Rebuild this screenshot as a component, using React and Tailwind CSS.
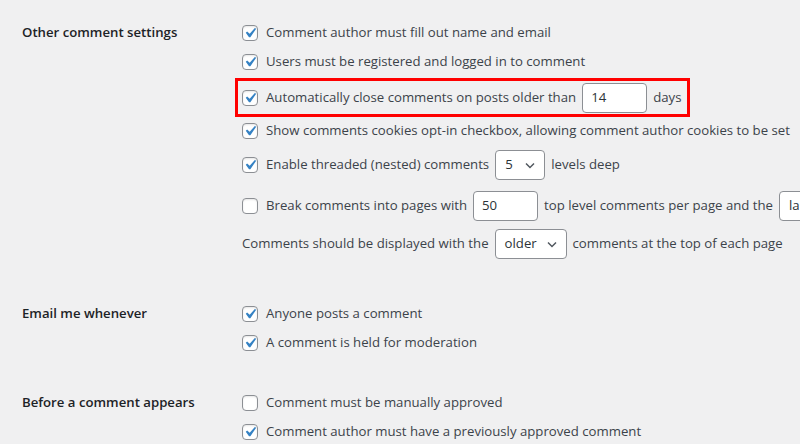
import React from 'react';

const font = { fontFamily: '"Open Sans", "Noto Sans", sans-serif' };

const Check = ({ checked }) => (
  <span className="relative inline-block w-4 h-4 shrink-0 mr-[2px] rounded-[4px] border border-[#8c8f94] bg-white shadow-[inset_0_1px_2px_rgba(0,0,0,0.1)]">
    {checked && (
      <svg viewBox="0 0 20 20" className="absolute -left-[3px] -top-[3px] w-5 h-5">
        <path d="M14.83 4.89l1.34.94-5.81 8.38H9.02L5.78 9.67l1.34-1.25 2.57 2.4z" fill="#3582c4" />
      </svg>
    )}
  </span>
);

const Chevron = () => (
  <svg viewBox="0 0 20 20" className="w-4 h-4 shrink-0">
    <path d="M5 8l5 5 5-5" fill="none" stroke="#50575e" strokeWidth="1.8" />
  </svg>
);

const TextBox = ({ value, w }) => (
  <span className={`inline-flex items-center h-[30px] px-2 rounded-[4px] border border-[#8c8f94] bg-white text-[#2c3338] ${w}`}>
    {value}
  </span>
);

const Select = ({ value, w }) => (
  <span className={`inline-flex items-center justify-between h-[30px] pl-[9px] pr-[6px] rounded-[4px] border border-[#8c8f94] bg-white text-[#2c3338] ${w}`}>
    <span>{value}</span>
    <Chevron />
  </span>
);

const Row = ({ checked, children, className = '' }) => (
  <div className={`flex items-center gap-[6px] h-[28px] whitespace-nowrap ${className}`}>
    {checked !== undefined && <Check checked={checked} />}
    {children}
  </div>
);

const Section = ({ label, children, className = '' }) => (
  <div className={`flex ${className}`}>
    <div className="w-[242px] shrink-0 pl-[22px] h-[28px] flex items-center font-semibold text-[#1d2327]">
      {label}
    </div>
    <div className="flex flex-col">{children}</div>
  </div>
);

export default function App() {
  return (
    <div
      className="w-[800px] h-[444px] overflow-hidden bg-[#f0f0f1] text-[13.2px] text-[#3c434a] pt-[19px]"
      style={font}
    >
      <Section label="Other comment settings">
        <Row checked>Comment author must fill out name and email</Row>
        <Row checked className="mt-[1px]">Users must be registered and logged in to comment</Row>
        <div className="flex items-center gap-[6px] h-[39px] mt-[2px] -ml-[7px] pl-[4px] w-[455px] border-[3px] border-[#ff0000] whitespace-nowrap">
          <Check checked />
          <span>Automatically close comments on posts older than</span>
          <TextBox value="14" w="w-[65px]" />
          <span>days</span>
        </div>
        <Row checked>Show comments cookies opt-in checkbox, allowing comment author cookies to be set</Row>
        <Row checked className="h-[30px] mt-[5px]">
          <span>Enable threaded (nested) comments</span>
          <Select value="5" w="w-[50px]" />
          <span>levels deep</span>
        </Row>
        <Row checked={false} className="h-[30px] mt-[11px]">
          <span>Break comments into pages with</span>
          <TextBox value="50" w="w-[65px]" />
          <span>top level comments per page and the</span>
          <Select value="last" w="w-[80px]" />
        </Row>
        <Row className="h-[30px] mt-[8px]">
          <span>Comments should be displayed with the</span>
          <Select value="older" w="w-[72px]" />
          <span>comments at the top of each page</span>
        </Row>
      </Section>

      <Section label="Email me whenever" className="mt-[41px]">
        <Row checked>Anyone posts a comment</Row>
        <Row checked className="mt-[1px]">A comment is held for moderation</Row>
      </Section>

      <Section label="Before a comment appears" className="mt-[32px]">
        <Row checked={false}>Comment must be manually approved</Row>
        <Row checked className="mt-[1px]">Comment author must have a previously approved comment</Row>
      </Section>
    </div>
  );
}
